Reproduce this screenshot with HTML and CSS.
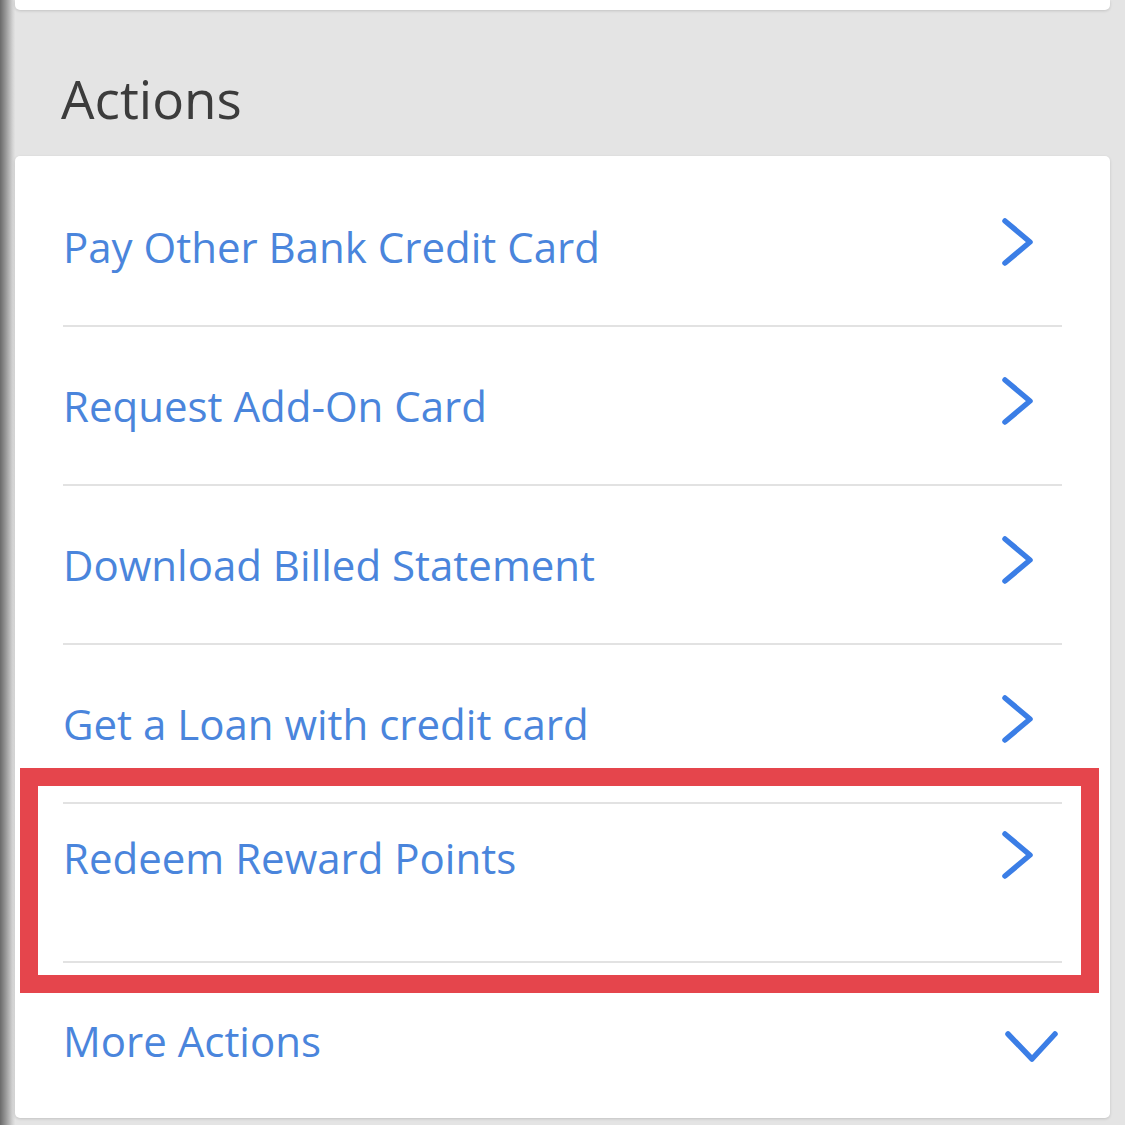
FILE: index.html
```html
<!DOCTYPE html>
<html>
<head>
    <title>Card Actions</title>
    <link rel="stylesheet" href="styles.css">
</head>
<body>
    <div class="screen">
        <div class="edge"></div>
        <div class="main">
            <div class="card card-top"></div>

            <h1 class="section-title">Actions</h1>

            <div class="card actions">
                <a class="action first" href="#">
                    <span>Pay Other Bank Credit Card</span>
                    <svg class="chevron" width="36" height="50" viewBox="0 0 36 50"><path d="M6 4 L31 25 L6 46" /></svg>
                </a>
                <a class="action" href="#">
                    <span>Request Add-On Card</span>
                    <svg class="chevron" width="36" height="50" viewBox="0 0 36 50"><path d="M6 4 L31 25 L6 46" /></svg>
                </a>
                <a class="action" href="#">
                    <span>Download Billed Statement</span>
                    <svg class="chevron" width="36" height="50" viewBox="0 0 36 50"><path d="M6 4 L31 25 L6 46" /></svg>
                </a>
                <a class="action" href="#">
                    <span>Get a Loan with credit card</span>
                    <svg class="chevron" width="36" height="50" viewBox="0 0 36 50"><path d="M6 4 L31 25 L6 46" /></svg>
                </a>
                <a class="action highlighted" href="#">
                    <span>Redeem Reward Points</span>
                    <svg class="chevron" width="36" height="50" viewBox="0 0 36 50"><path d="M6 4 L31 25 L6 46" /></svg>
                    <div class="marker"></div>
                </a>
                <a class="action more" href="#">
                    <span>More Actions</span>
                    <svg class="chevron-down" width="56" height="34" viewBox="0 0 56 34"><path d="M5 5 L29 30 L52 5" /></svg>
                </a>
            </div>
        </div>
    </div>
</body>
</html>
```

FILE: styles.css
```css
* {
    margin: 0;
    padding: 0;
    box-sizing: border-box;
    font-family: 'Open Sans', 'Noto Sans', sans-serif;
}

body {
    background: #e4e4e4;
    height: 1125px;
    overflow: hidden;
}

.screen {
    display: flex;
    min-height: 1125px;
}

.edge {
    width: 15px;
    flex-shrink: 0;
    background: linear-gradient(90deg, #6a6a6a 0%, #9a9a9a 40%, #d4d4d4 85%, #e2e2e2 100%);
}

.main {
    flex: 1;
    padding-right: 15px;
}

.card {
    background: white;
    border-radius: 5px;
    box-shadow: 0 1px 3px rgba(0,0,0,0.15);
}

.card-top {
    height: 10px;
    border-radius: 0 0 5px 5px;
}

.section-title {
    font-size: 53px;
    font-weight: 400;
    line-height: 64px;
    color: #3c3c3c;
    margin: 57px 0 25px 46px;
}

.actions {
    padding-top: 12px;
}

.action {
    position: relative;
    display: flex;
    align-items: center;
    justify-content: space-between;
    height: 159px;
    margin: 0 48px;
    border-bottom: 2px solid #e2e2e2;
    color: #4a85dc;
    text-decoration: none;
    font-size: 42px;
    line-height: 50px;
}

.chevron {
    margin-right: 27px;
    margin-bottom: 10px;
}

.chevron path,
.chevron-down path {
    fill: none;
    stroke: #3b7ee6;
    stroke-width: 5.5;
    stroke-linecap: round;
    stroke-linejoin: round;
}

.highlighted {
    align-items: flex-start;
    padding-top: 29px;
}

.highlighted .chevron {
    margin-top: -3px;
}

.more {
    height: 155px;
    border-bottom: none;
}

.chevron-down {
    margin-right: 3px;
    margin-top: 10px;
}

.marker {
    position: absolute;
    top: -36px;
    bottom: -32px;
    left: -43px;
    right: -37px;
    border: 18px solid #e5454c;
    pointer-events: none;
}
```
